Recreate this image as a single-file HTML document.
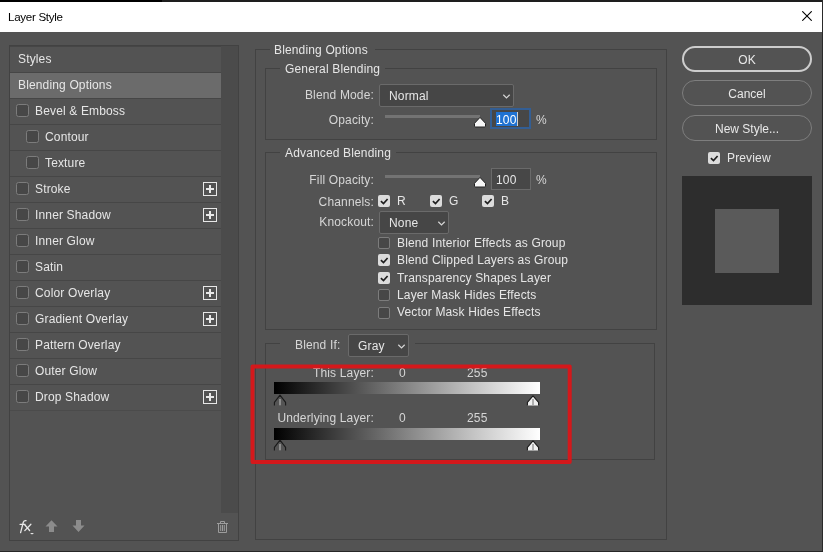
<!DOCTYPE html>
<html><head><meta charset="utf-8">
<style>
*{margin:0;padding:0;box-sizing:border-box}
html,body{width:823px;height:552px;overflow:hidden;background:#535353}
body{position:relative;font-family:"Liberation Sans",sans-serif;font-size:12px;color:#e6e6e6}
.a{position:absolute}
.t{position:absolute;will-change:transform;white-space:nowrap;line-height:14px;font-size:12px;letter-spacing:0.15px}
.r{text-align:right}
.lbl{color:#d6d6d6}
.row{position:absolute;left:10px;width:211px;height:26px;border-top:1px solid #464646}
.cb{position:absolute;width:12px;height:12px;border:1px solid #7c7c7c;border-radius:2px;background:#474747}
.cbl{width:13px;height:13px;border-radius:2.5px}
.cbc{position:absolute;width:12px;height:12px;border-radius:2px;background:#dcdcdc}
.cbc svg{position:absolute;left:0;top:0}
.plus{position:absolute;left:203px;width:14px;height:14px;border:1px solid #e8e8e8}
.plus:before{content:"";position:absolute;left:2px;top:5px;width:8px;height:2px;background:#e8e8e8}
.plus:after{content:"";position:absolute;left:5px;top:2px;width:2px;height:8px;background:#e8e8e8}
.box{position:absolute;border:1px solid #424242}
.gap{position:absolute;height:3px;background:#535353}
.dd{position:absolute;background:#464646;border:1px solid #6a6a6a;border-radius:2px}
.btn{position:absolute;left:682px;width:130px;height:26px;border:1px solid #7e7e7e;border-radius:13px;text-align:center;line-height:26px;color:#e8e8e8}
</style></head><body>
<!-- top strip / title -->
<div class="a" style="left:0;top:0;width:162px;height:2px;background:#000"></div>
<div class="a" style="left:162px;top:0;width:661px;height:2px;background:#1e1e1e"></div>
<div class="a" style="left:0;top:2px;width:822px;height:30px;background:#fff"></div>
<div class="a" style="left:822px;top:0;width:1px;height:552px;background:#2a2a2a"></div>
<div class="a" style="left:0;top:551px;width:823px;height:1px;background:#262626"></div>
<div class="t" style="left:8px;top:9.6px;font-size:11.6px;letter-spacing:-0.3px;color:#000">Layer Style</div>
<svg class="a" style="left:802px;top:11px" width="10" height="10" viewBox="0 0 10 10"><path d="M0.3 0.3L9.7 9.7M9.7 0.3L0.3 9.7" stroke="#000" stroke-width="1.1"/></svg>

<!-- left panel -->
<div class="box" style="left:9px;top:45px;width:230px;height:496px"></div>
<div class="a" style="left:221px;top:46px;width:17px;height:467px;background:#4b4b4b"></div>
<div class="row" style="top:46px"></div>
<div class="t" style="left:18px;top:52px">Styles</div>
<div class="row" style="top:72px;background:#6b6b6b"></div>
<div class="t" style="left:18px;top:78px">Blending Options</div>
<div class="row" style="top:98px"></div>
<div class="cb cbl" style="left:16px;top:104px"></div><div class="t" style="left:35px;top:104px">Bevel &amp; Emboss</div>
<div class="row" style="top:124px"></div>
<div class="cb cbl" style="left:26px;top:130px"></div><div class="t" style="left:45px;top:130px">Contour</div>
<div class="row" style="top:150px"></div>
<div class="cb cbl" style="left:26px;top:156px"></div><div class="t" style="left:45px;top:156px">Texture</div>
<div class="row" style="top:176px"></div>
<div class="cb cbl" style="left:16px;top:182px"></div><div class="t" style="left:35px;top:182px">Stroke</div><div class="plus" style="top:182px"></div>
<div class="row" style="top:202px"></div>
<div class="cb cbl" style="left:16px;top:208px"></div><div class="t" style="left:35px;top:208px">Inner Shadow</div><div class="plus" style="top:208px"></div>
<div class="row" style="top:228px"></div>
<div class="cb cbl" style="left:16px;top:234px"></div><div class="t" style="left:35px;top:234px">Inner Glow</div>
<div class="row" style="top:254px"></div>
<div class="cb cbl" style="left:16px;top:260px"></div><div class="t" style="left:35px;top:260px">Satin</div>
<div class="row" style="top:280px"></div>
<div class="cb cbl" style="left:16px;top:286px"></div><div class="t" style="left:35px;top:286px">Color Overlay</div><div class="plus" style="top:286px"></div>
<div class="row" style="top:306px"></div>
<div class="cb cbl" style="left:16px;top:312px"></div><div class="t" style="left:35px;top:312px">Gradient Overlay</div><div class="plus" style="top:312px"></div>
<div class="row" style="top:332px"></div>
<div class="cb cbl" style="left:16px;top:338px"></div><div class="t" style="left:35px;top:338px">Pattern Overlay</div>
<div class="row" style="top:358px"></div>
<div class="cb cbl" style="left:16px;top:364px"></div><div class="t" style="left:35px;top:364px">Outer Glow</div>
<div class="row" style="top:384px"></div>
<div class="cb cbl" style="left:16px;top:390px"></div><div class="t" style="left:35px;top:390px">Drop Shadow</div><div class="plus" style="top:390px"></div>
<div class="row" style="top:410px;height:1px;border-top-color:#4b4b4b"></div>
<!-- bottom icons -->
<svg class="a" style="left:14px;top:514px" width="24" height="24" viewBox="0 0 24 24"><path d="M12 6.6Q10 6.3 9.3 8.3L6.6 18.6M6.1 10.4H11.1M10.5 10.5L15.6 16.5M16.9 10.3L10.8 16.6" stroke="#e8e8e8" stroke-width="1.3" fill="none" stroke-linecap="round"/><path d="M16 18.9H20L18 20.6Z" fill="#e8e8e8"/></svg>

<svg class="a" style="left:45px;top:520px" width="13" height="12" viewBox="0 0 13 12"><path d="M6.5 0.3L12.5 6.6H9V12H4V6.6H0.5Z" fill="#8c8c8c"/></svg>
<svg class="a" style="left:72px;top:520px" width="13" height="12" viewBox="0 0 13 12"><path d="M6.5 12L12.5 5.6H9V0H4V5.6H0.5Z" fill="#8c8c8c"/></svg>
<svg class="a" style="left:216px;top:520px" width="13" height="14" viewBox="0 0 13 14"><path d="M1 3.5H12M4.5 3.5V1.5H8.5V3.5M2.5 3.5V12.5H10.5V3.5M4.7 5V11M6.5 5V11M8.3 5V11" stroke="#9c9c9c" fill="none" stroke-width="1"/></svg>

<!-- Blending options outer -->
<div class="box" style="left:255px;top:49px;width:412px;height:491px"></div>
<div class="gap" style="left:270px;top:48px;width:105px"></div>
<div class="t" style="left:274px;top:43px">Blending Options</div>

<!-- General blending -->
<div class="box" style="left:265px;top:68px;width:392px;height:72px"></div>
<div class="gap" style="left:280px;top:67px;width:105px"></div>
<div class="t" style="left:285px;top:62px">General Blending</div>
<div class="t r lbl" style="left:274px;top:88px;width:100px">Blend Mode:</div>
<div class="dd" style="left:379px;top:84px;width:135px;height:23px"></div>
<div class="t" style="left:389px;top:89px">Normal</div>
<svg class="a" style="left:502px;top:93px" width="9" height="6" viewBox="0 0 9 6"><path d="M1.3 1.7L4.5 4.9L7.7 1.7" stroke="#d4d4d4" stroke-width="1.25" fill="none"/></svg>
<div class="t r lbl" style="left:274px;top:113px;width:100px">Opacity:</div>
<div class="a" style="left:385px;top:115px;width:95px;height:3px;background:#737373"></div>
<svg class="a" style="left:473px;top:117px" width="14" height="11" viewBox="0 0 14 11"><path d="M7 0.4L12.5 6.3V9Q12.5 10 11.5 10H2.5Q1.5 10 1.5 9V6.3Z" fill="#f6f6f6" stroke="#222" stroke-width="1"/></svg>
<div class="a" style="left:490px;top:108px;width:41px;height:21px;border:2px solid #335e94;background:#474747"></div>
<div class="a" style="left:496px;top:112px;width:21px;height:14px;background:#1f72d2"></div>
<div class="t" style="left:496px;top:113px;color:#fff">100</div>
<div class="a" style="left:517px;top:112px;width:1px;height:14px;background:#cfcfcf"></div>
<div class="t lbl" style="left:536px;top:113px">%</div>

<!-- Advanced blending -->
<div class="box" style="left:265px;top:152px;width:392px;height:178px"></div>
<div class="gap" style="left:280px;top:151px;width:116px"></div>
<div class="t" style="left:285px;top:146px">Advanced Blending</div>
<div class="t r lbl" style="left:274px;top:173px;width:100px">Fill Opacity:</div>
<div class="a" style="left:385px;top:175px;width:95px;height:3px;background:#737373"></div>
<svg class="a" style="left:473px;top:177px" width="14" height="11" viewBox="0 0 14 11"><path d="M7 0.4L12.5 6.3V9Q12.5 10 11.5 10H2.5Q1.5 10 1.5 9V6.3Z" fill="#f6f6f6" stroke="#222" stroke-width="1"/></svg>
<div class="a" style="left:491px;top:168px;width:40px;height:22px;border:1px solid #6a6a6a;background:#474747"></div>
<div class="t" style="left:496px;top:173px">100</div>
<div class="t lbl" style="left:536px;top:173px">%</div>
<div class="t r lbl" style="left:274px;top:195px;width:100px">Channels:</div>
<div class="cbc" style="left:378px;top:195px"><svg width="12" height="12" viewBox="0 0 12 12"><path d="M2.9 6.1L5.5 8.5L9.6 4" stroke="#1e1e1e" stroke-width="1.7" fill="none"/></svg></div>
<div class="t" style="left:397px;top:194px">R</div>
<div class="cbc" style="left:430px;top:195px"><svg width="12" height="12" viewBox="0 0 12 12"><path d="M2.9 6.1L5.5 8.5L9.6 4" stroke="#1e1e1e" stroke-width="1.7" fill="none"/></svg></div>
<div class="t" style="left:449px;top:194px">G</div>
<div class="cbc" style="left:482px;top:195px"><svg width="12" height="12" viewBox="0 0 12 12"><path d="M2.9 6.1L5.5 8.5L9.6 4" stroke="#1e1e1e" stroke-width="1.7" fill="none"/></svg></div>
<div class="t" style="left:501px;top:194px">B</div>
<div class="t r lbl" style="left:274px;top:215px;width:100px">Knockout:</div>
<div class="dd" style="left:379px;top:211px;width:70px;height:23px"></div>
<div class="t" style="left:389px;top:216px">None</div>
<svg class="a" style="left:437px;top:220px" width="9" height="6" viewBox="0 0 9 6"><path d="M1.3 1.7L4.5 4.9L7.7 1.7" stroke="#d4d4d4" stroke-width="1.25" fill="none"/></svg>
<div class="cb" style="left:378px;top:237px"></div><div class="t" style="left:397px;top:236px">Blend Interior Effects as Group</div>
<div class="cbc" style="left:378px;top:254px"><svg width="12" height="12" viewBox="0 0 12 12"><path d="M2.9 6.1L5.5 8.5L9.6 4" stroke="#1e1e1e" stroke-width="1.7" fill="none"/></svg></div><div class="t" style="left:397px;top:253px">Blend Clipped Layers as Group</div>
<div class="cbc" style="left:378px;top:272px"><svg width="12" height="12" viewBox="0 0 12 12"><path d="M2.9 6.1L5.5 8.5L9.6 4" stroke="#1e1e1e" stroke-width="1.7" fill="none"/></svg></div><div class="t" style="left:397px;top:271px">Transparency Shapes Layer</div>
<div class="cb" style="left:378px;top:289px"></div><div class="t" style="left:397px;top:288px">Layer Mask Hides Effects</div>
<div class="cb" style="left:378px;top:307px"></div><div class="t" style="left:397px;top:305px">Vector Mask Hides Effects</div>

<!-- Blend If -->
<div class="box" style="left:265px;top:343px;width:390px;height:117px"></div>
<div class="gap" style="left:280px;top:342px;width:135px"></div>
<div class="t lbl" style="left:295px;top:338px">Blend If:</div>
<div class="dd" style="left:348px;top:334px;width:61px;height:23px"></div>
<div class="t" style="left:358px;top:339px">Gray</div>
<svg class="a" style="left:397px;top:343px" width="9" height="6" viewBox="0 0 9 6"><path d="M1.3 1.7L4.5 4.9L7.7 1.7" stroke="#d4d4d4" stroke-width="1.25" fill="none"/></svg>

<div class="t r lbl" style="left:274px;top:366px;width:100px">This Layer:</div>
<div class="t lbl" style="left:399px;top:366px">0</div>
<div class="t lbl" style="left:467px;top:366px">255</div>
<div class="a" style="left:274px;top:382px;width:266px;height:12px;background:linear-gradient(to right,#000 0%,#434343 25%,#858585 50%,#c4c4c4 75%,#fff 100%)"></div>
<svg class="a" style="left:273px;top:394px" width="14" height="13" viewBox="0 0 14 13"><path d="M1.4 11.5V8.3L7 1.2L12.6 8.3V11.5" fill="#545454" stroke="#1a1a1a" stroke-width="1.1" stroke-linejoin="round"/><rect x="6.2" y="5" width="1.6" height="6.3" fill="#9a9a9a"/></svg>
<svg class="a" style="left:526px;top:394px" width="14" height="13" viewBox="0 0 14 13"><path d="M1.4 11.5V8.3L7 1.8L12.6 8.3V11.5" fill="#efefef" stroke="#1a1a1a" stroke-width="1.1" stroke-linejoin="round"/><rect x="6.2" y="5" width="1.6" height="6.3" fill="#a0a0a0"/></svg>

<div class="t r lbl" style="left:274px;top:411px;width:100px">Underlying Layer:</div>
<div class="t lbl" style="left:399px;top:411px">0</div>
<div class="t lbl" style="left:467px;top:411px">255</div>
<div class="a" style="left:274px;top:428px;width:266px;height:12px;background:linear-gradient(to right,#000 0%,#434343 25%,#858585 50%,#c4c4c4 75%,#fff 100%)"></div>
<svg class="a" style="left:273px;top:439px" width="14" height="13" viewBox="0 0 14 13"><path d="M1.4 11.5V8.3L7 1.2L12.6 8.3V11.5" fill="#545454" stroke="#1a1a1a" stroke-width="1.1" stroke-linejoin="round"/><rect x="6.2" y="5" width="1.6" height="6.3" fill="#9a9a9a"/></svg>
<svg class="a" style="left:526px;top:439px" width="14" height="13" viewBox="0 0 14 13"><path d="M1.4 11.5V8.3L7 1.8L12.6 8.3V11.5" fill="#efefef" stroke="#1a1a1a" stroke-width="1.1" stroke-linejoin="round"/><rect x="6.2" y="5" width="1.6" height="6.3" fill="#a0a0a0"/></svg>

<!-- red highlight -->
<svg class="a" style="left:0;top:0" width="823" height="552"><rect x="252.5" y="366.6" width="317.2" height="95.4" fill="none" stroke="#d4181b" stroke-width="4" stroke-linejoin="round"/></svg>

<!-- right buttons -->
<div class="btn" style="top:46px;border:2px solid #cdcdcd;line-height:24px">OK</div>
<div class="btn" style="top:80px">Cancel</div>
<div class="btn" style="top:115px">New Style...</div>
<div class="cbc" style="left:708px;top:152px"><svg width="12" height="12" viewBox="0 0 12 12"><path d="M2.9 6.1L5.5 8.5L9.6 4" stroke="#1e1e1e" stroke-width="1.7" fill="none"/></svg></div>
<div class="t" style="left:727px;top:151px">Preview</div>
<div class="a" style="left:682px;top:176px;width:130px;height:129px;background:#2d2d2d"></div>
<div class="a" style="left:715px;top:209px;width:64px;height:64px;background:#5a5a5a"></div>
</body></html>
